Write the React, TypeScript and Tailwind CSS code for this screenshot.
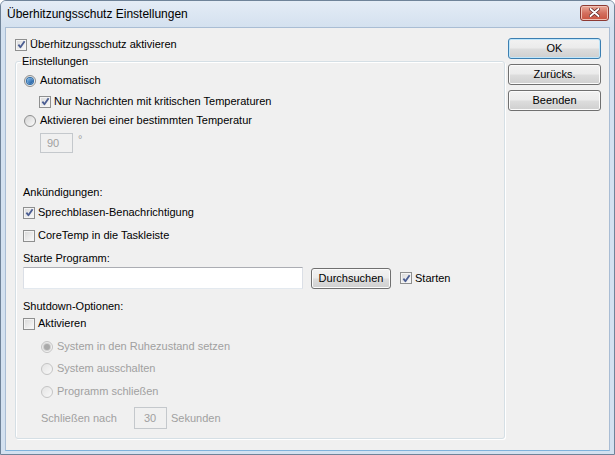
import { FunctionComponent, ReactNode } from "react";

const CheckBox: FunctionComponent<{ checked?: boolean; disabled?: boolean }> = ({ checked, disabled }) => (
  <span
    className={`w-[12px] h-[12px] shrink-0 flex items-center justify-center border ${
      disabled ? "border-[#b1b1b1] bg-[#f4f4f4]" : "border-[#8e8f8f] bg-linear-to-br from-[#d8d8d8] to-[#fbfbfb]"
    } shadow-[inset_0_0_0_1px_#f4f4f4]`}
  >
    {checked && (
      <svg width="9" height="9" viewBox="0 0 9 9">
        <path d="M1.4 4.6 L3.4 7.2 L7.6 1.2" fill="none" stroke="#4a5d92" strokeWidth="1.8" strokeLinejoin="round" />
      </svg>
    )}
  </span>
);

const Radio: FunctionComponent<{ checked?: boolean; disabled?: boolean }> = ({ checked, disabled }) => (
  <span
    className={`w-[12px] h-[12px] shrink-0 rounded-full flex items-center justify-center border ${
      disabled ? "border-[#c4c4c4] bg-linear-to-br from-[#e4e4e4] to-[#f8f8f8]" : "border-[#8e8f8f] bg-linear-to-br from-[#d4d4d4] to-[#fbfbfb]"
    }`}
  >
    {checked && (
      <span
        className={`w-[6px] h-[6px] rounded-full ${
          disabled ? "bg-[#a9a9a9] shadow-[0_0_0_1px_#d0d0d0]" : "bg-linear-to-br from-[#8cc6f2] to-[#0d4f96] shadow-[0_0_0_1px_#2d6ca8]"
        }`}
      />
    )}
  </span>
);

const Btn: FunctionComponent<{ children: ReactNode; isDefault?: boolean; className?: string }> = ({ children, isDefault, className }) => (
  <div
    className={`h-[21px] flex items-center justify-center rounded-[3px] border ${
      isDefault ? "border-[#3c7fb1] shadow-[inset_0_0_0_1px_#bfe6fb]" : "border-[#707070] shadow-[inset_0_0_0_1px_#fbfbfb]"
    } bg-[linear-gradient(#f2f2f2_0%,#ebebeb_48%,#dddddd_52%,#cfcfcf_100%)] text-black ${className ?? ""}`}
  >
    {children}
  </div>
);

const Row: FunctionComponent<{ children: ReactNode; className?: string }> = ({ children, className }) => (
  <div className={`h-[13px] flex items-center ${className ?? ""}`}>{children}</div>
);

export default function App() {
  const gray = "text-[#a0a0a0]";

  return (
    <div className="w-[615px] h-[455px] flex flex-col bg-[#d3e1f0] border border-[#6f8399] rounded-t-[6px] font-['Liberation_Sans',Arial,sans-serif] text-[11px] text-black overflow-hidden select-none">
      {/* title bar */}
      <div className="h-[26px] flex items-center pl-[6px] pr-[5px] bg-linear-to-b from-[#e4ecf6] to-[#d4e1ef]">
        <span className="text-[12px] text-black">Überhitzungsschutz Einstellungen</span>
        <div className="ml-auto w-[29px] h-[16px] mb-[3px] rounded-[3px] border border-[#8d3a33] bg-linear-to-b from-[#e9a99a] via-[#d4705f] to-[#c9533f] shadow-[inset_0_0_0_1px_#f0c2b6] flex items-center justify-center">
          <svg width="11" height="9" viewBox="0 0 11 9">
            <path d="M1.5 1 L9.5 8 M9.5 1 L1.5 8" stroke="#5a2020" strokeWidth="3.4" strokeLinecap="round" />
            <path d="M1.5 1 L9.5 8 M9.5 1 L1.5 8" stroke="#ffffff" strokeWidth="1.9" strokeLinecap="round" />
          </svg>
        </div>
      </div>

      {/* client area */}
      <div className="flex-1 flex mx-[4px] mb-[3px] bg-[#f0f0f0] border border-[#a9bdd4] border-b-[#7fb2dc]">
        <div className="w-[490px] ml-[9px] flex flex-col">
          <Row className="mt-[10px] gap-[3px]">
            <CheckBox checked />
            <span>Überhitzungsschutz aktivieren</span>
          </Row>

          <fieldset className="mt-[4px] border border-[#d5dfe5] rounded-[3px] shadow-[1px_1px_0_#ffffff,inset_1px_1px_0_#ffffff] pl-[7px] pb-[9px] flex flex-col">
            <legend className="ml-[-2px] px-[1px] h-[13px] leading-[13px]">Einstellungen</legend>

            <Row className="mt-[6px] ml-[1px] gap-[4px]">
              <Radio checked />
              <span>Automatisch</span>
            </Row>
            <Row className="mt-[8px] ml-[16px] gap-[3px]">
              <CheckBox checked />
              <span>Nur Nachrichten mit kritischen Temperaturen</span>
            </Row>
            <Row className="mt-[6px] ml-[1px] gap-[4px]">
              <Radio />
              <span>Aktivieren bei einer bestimmten Temperatur</span>
            </Row>
            <div className="mt-[6px] ml-[17px] flex items-start">
              <div className={`w-[33px] h-[20px] border border-[#c4c8cc] bg-[#f0f0f0] flex items-center pl-[6px] ${gray}`}>90</div>
              <span className={`ml-[5px] leading-[13px] ${gray}`}>°</span>
            </div>

            <Row className="mt-[33px]">
              <span>Ankündigungen:</span>
            </Row>
            <Row className="mt-[7px] gap-[3px]">
              <CheckBox checked />
              <span>Sprechblasen-Benachrichtigung</span>
            </Row>
            <Row className="mt-[10px] gap-[3px]">
              <CheckBox />
              <span>CoreTemp in die Taskleiste</span>
            </Row>
            <Row className="mt-[10px]">
              <span>Starte Programm:</span>
            </Row>
            <div className="mt-[2px] flex items-center">
              <div className="w-[280px] h-[22px] bg-white border border-[#abadb3] border-x-[#dbdfe6] border-b-[#e3e9ef]" />
              <Btn className="ml-[8px] w-[80px]">Durchsuchen</Btn>
              <div className="ml-[9px] flex items-center gap-[3px]">
                <CheckBox checked />
                <span>Starten</span>
              </div>
            </div>

            <Row className="mt-[11px]">
              <span>Shutdown-Optionen:</span>
            </Row>
            <Row className="mt-[4px] gap-[3px]">
              <CheckBox />
              <span>Aktivieren</span>
            </Row>
            <Row className={`mt-[10px] ml-[18px] gap-[4px] ${gray}`}>
              <Radio checked disabled />
              <span>System in den Ruhezustand setzen</span>
            </Row>
            <Row className={`mt-[9px] ml-[18px] gap-[4px] ${gray}`}>
              <Radio disabled />
              <span>System ausschalten</span>
            </Row>
            <Row className={`mt-[10px] ml-[18px] gap-[4px] ${gray}`}>
              <Radio disabled />
              <span>Programm schließen</span>
            </Row>
            <div className={`mt-[9px] ml-[18px] h-[22px] flex items-center ${gray}`}>
              <span className="w-[93px]">Schließen nach</span>
              <div className="w-[33px] h-[22px] border border-[#c4c8cc] bg-[#f0f0f0] flex items-center pl-[9px]">30</div>
              <span className="ml-[4px]">Sekunden</span>
            </div>
          </fieldset>
        </div>

        <div className="ml-[3px] mt-[10px] w-[93px] flex flex-col gap-[5px]">
          <Btn isDefault>OK</Btn>
          <Btn>Zurücks.</Btn>
          <Btn>Beenden</Btn>
        </div>
      </div>
    </div>
  );
}
